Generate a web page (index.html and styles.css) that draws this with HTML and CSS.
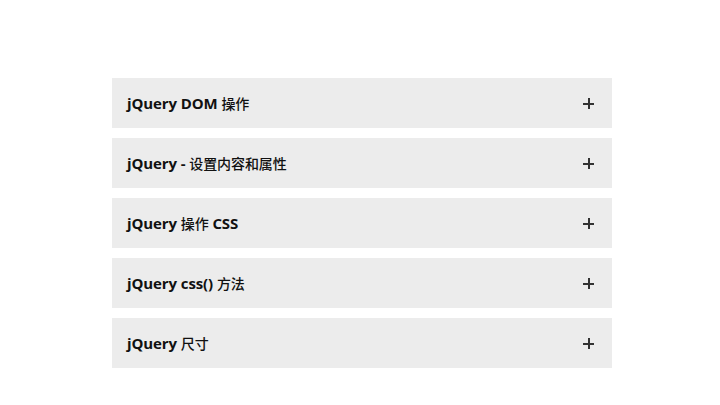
FILE: index.html
```html
<!DOCTYPE html>
<html lang="zh">
<head>
    <meta charset="UTF-8">
    <title>jQuery 手风琴</title>
    <link rel="stylesheet" href="styles.css">
</head>
<body>
    <div class="accordion">
        <div class="panel"><span class="title">jQuery DOM <span class="zh">操作</span></span><span class="plus"></span></div>
        <div class="panel"><span class="title">jQuery - <span class="zh">设置内容和属性</span></span><span class="plus"></span></div>
        <div class="panel"><span class="title">jQuery <span class="zh">操作</span> CSS</span><span class="plus"></span></div>
        <div class="panel"><span class="title">jQuery css() <span class="zh">方法</span></span><span class="plus"></span></div>
        <div class="panel"><span class="title">jQuery <span class="zh">尺寸</span></span><span class="plus"></span></div>
    </div>
</body>
</html>
```
FILE: styles.css
```css
body{
    margin: 0;
    background: #fff;
    font-family: "Open Sans", "Noto Sans CJK SC", sans-serif;
}
.accordion{
    width: 500px;
    margin: 78px auto 0 112px;
    display: flex; flex-direction: column; gap: 10px;
}
.panel{
    height: 50px; background-color: #ececec;
    display: flex; align-items: center; justify-content: space-between;
    padding: 0 18px 0 15px;
    box-sizing: border-box;
}
.title{
    font-size: 15px; font-weight: bold; color: #111;
    letter-spacing: -0.1px;
}
.zh{ /* 한자 부분 */
    font-family: "Noto Sans CJK SC", sans-serif;
    font-size: 14px; font-weight: 500;
}
.plus{ /* + 아이콘 */
    position: relative; width: 11px; height: 11px;
    margin-top: 1px;
}
.plus::before, .plus::after{
    content: ""; position: absolute; background: #333;
}
.plus::before{ left: 0; top: 4.5px; width: 11px; height: 2px; }
.plus::after{ top: 0; left: 4.5px; width: 2px; height: 11px; }
```
